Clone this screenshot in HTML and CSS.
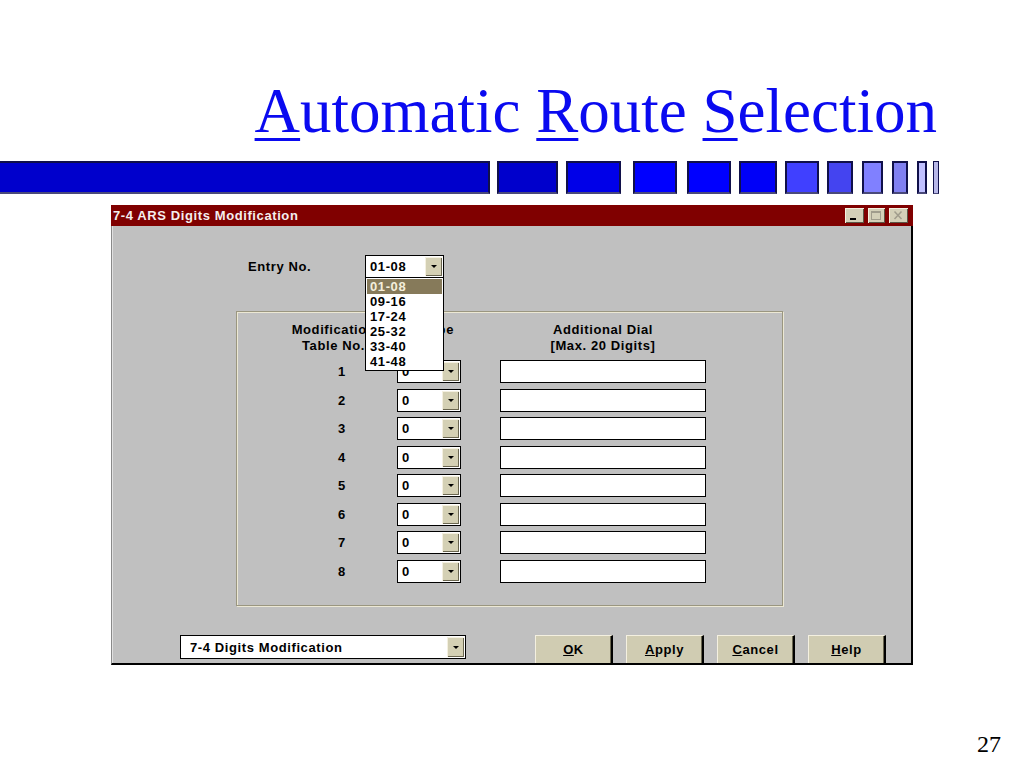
FILE: index.html
```html
<!DOCTYPE html>
<html>
<head>
<title>Automatic Route Selection</title>
<meta charset="UTF-8">
<link rel="stylesheet" href="styles.css">
</head>
<body>

	<h1 class="slide-title"><u>A</u>utomatic <u>R</u>oute <u>S</u>election</h1>

	<div class="stripe">
		<span></span><span></span><span></span><span></span><span></span><span></span>
		<span></span><span></span><span></span><span></span><span></span><span></span>
	</div>

	<div class="dialog">
		<div class="caption">
			<span class="caption-text">7-4 ARS Digits Modification</span>
			<div class="caption-btns">
				<span class="cbtn"><svg width="19" height="15" viewBox="0 0 19 15"><rect x="5" y="10" width="6" height="2" fill="#000"/></svg></span>
				<span class="cbtn"><svg width="17" height="15" viewBox="0 0 17 15"><rect x="3.5" y="3.5" width="9" height="8" fill="none" stroke="#a09c8c" stroke-width="1"/><line x1="3.5" y1="4.5" x2="12.5" y2="4.5" stroke="#a09c8c"/></svg></span>
				<span class="cbtn"><svg width="19" height="15" viewBox="0 0 19 15"><path d="M5.5 3.5 L12.5 11 M12.5 3.5 L5.5 11" stroke="#a09c8c" stroke-width="1.5"/></svg></span>
			</div>
		</div>

		<div class="client">
			<div class="entry-row">
				<label class="entry-label">Entry No.</label>
				<div class="combo entry-combo">
					<span class="combo-value">01-08</span>
					<span class="drop-btn"><i></i></span>
					<ul class="droplist">
						<li class="sel">01-08</li>
						<li>09-16</li>
						<li>17-24</li>
						<li>25-32</li>
						<li>33-40</li>
						<li>41-48</li>
					</ul>
				</div>
			</div>

			<div class="group">
				<div class="grid head">
					<div class="h-no">Modification<br>Table No.</div>
					<div class="h-type">Type</div>
					<div class="h-dial">Additional Dial<br>[Max. 20 Digits]</div>
				</div>
				<div class="grid rows">
					<div class="no">1</div><div class="combo small"><span class="combo-value">0</span><span class="drop-btn"><i></i></span></div><div class="field"></div>
					<div class="no">2</div><div class="combo small"><span class="combo-value">0</span><span class="drop-btn"><i></i></span></div><div class="field"></div>
					<div class="no">3</div><div class="combo small"><span class="combo-value">0</span><span class="drop-btn"><i></i></span></div><div class="field"></div>
					<div class="no">4</div><div class="combo small"><span class="combo-value">0</span><span class="drop-btn"><i></i></span></div><div class="field"></div>
					<div class="no">5</div><div class="combo small"><span class="combo-value">0</span><span class="drop-btn"><i></i></span></div><div class="field"></div>
					<div class="no">6</div><div class="combo small"><span class="combo-value">0</span><span class="drop-btn"><i></i></span></div><div class="field"></div>
					<div class="no">7</div><div class="combo small"><span class="combo-value">0</span><span class="drop-btn"><i></i></span></div><div class="field"></div>
					<div class="no">8</div><div class="combo small"><span class="combo-value">0</span><span class="drop-btn"><i></i></span></div><div class="field"></div>
				</div>
			</div>

			<div class="footer-row">
				<div class="combo page-combo">
					<span class="combo-value">7-4 Digits Modification</span>
					<span class="drop-btn"><i></i></span>
				</div>
				<div class="buttons">
					<button class="btn"><u>O</u>K</button>
					<button class="btn"><u>A</u>pply</button>
					<button class="btn"><u>C</u>ancel</button>
					<button class="btn"><u>H</u>elp</button>
				</div>
			</div>
		</div>
	</div>

	<div class="page-no">27</div>

</body>
</html>
```

FILE: styles.css
```css
body {
	margin: 0;
	background: #fff;
	font-family: "Liberation Sans", Arial, sans-serif;
}

.slide-title {
	margin: 80px 87px 0 0;
	text-align: right;
	font: normal 63px/63px "Liberation Serif", "Times New Roman", serif;
	color: #0a0af0;
}

.slide-title u {
	text-decoration-thickness: 3px;
	text-underline-offset: 6px;
}

/* blue strip under the title */
.stripe {
	display: flex;
	margin-top: 18px;
	height: 33px;
}

.stripe span {
	box-sizing: border-box;
	height: 33px;
	border: 2px solid #10104a;
	border-bottom-color: #4a4a7a;
}

.stripe span:nth-child(1)  { width: 490px; background: #0000cc; border-left: 0; }
.stripe span:nth-child(2)  { width: 61px; margin-left: 7px; background: #0000cc; }
.stripe span:nth-child(3)  { width: 55px; margin-left: 8px; background: #0000e8; }
.stripe span:nth-child(4)  { width: 44px; margin-left: 12px; background: #0000ff; }
.stripe span:nth-child(5)  { width: 44px; margin-left: 10px; background: #0000ff; }
.stripe span:nth-child(6)  { width: 38px; margin-left: 8px; background: #0000f8; }
.stripe span:nth-child(7)  { width: 34px; margin-left: 8px; background: #4040ff; }
.stripe span:nth-child(8)  { width: 26px; margin-left: 8px; background: #4444f0; }
.stripe span:nth-child(9)  { width: 21px; margin-left: 9px; background: #8080ff; }
.stripe span:nth-child(10) { width: 16px; margin-left: 9px; background: #8080f0; }
.stripe span:nth-child(11) { width: 10px; margin-left: 9px; background: #c0c0ff; }
.stripe span:nth-child(12) { width: 6px; margin-left: 6px; background: #b8b8e8; border-width: 1px; }

/* the window */
.dialog {
	margin: 11px 0 0 111px;
	width: 802px;
	font-size: 13px;
	font-weight: bold;
	letter-spacing: 0.6px;
	color: #000;
}

.caption {
	display: flex;
	align-items: center;
	justify-content: space-between;
	height: 21px;
	padding: 0 5px 0 2px;
	background: #800000;
	color: #f4eeee;
	font-size: 13px;
}

.caption-btns {
	display: flex;
	gap: 4px;
}

.cbtn {
	display: block;
	height: 15px;
	background: #d4d0b8;
	box-shadow: inset 1px 1px 0 #f4f0e0, inset -1px -1px 0 #5a5646;
}

.cbtn svg {
	display: block;
}

.client {
	background: #c0c0c0;
	border-left: 1px solid #8a8a8a;
	box-shadow: inset 1px 0 0 #e0e0e0;
	border-right: 2px solid #000;
	border-bottom: 2px solid #000;
	padding: 29px 0 0 0;
}

.entry-row {
	display: flex;
	align-items: center;
	padding-left: 136px;
}

.entry-label {
	width: 117px;
}

/* combo boxes */
.combo {
	position: relative;
	box-sizing: border-box;
	display: flex;
	align-items: center;
	justify-content: space-between;
	background: #fff;
	border: 1px solid #000;
	padding: 1px 1px 1px 4px;
}

.entry-combo {
	width: 79px;
	height: 23px;
}

.combo.small {
	width: 64px;
	height: 23px;
}

.page-combo {
	width: 286px;
	height: 24px;
	padding-left: 9px;
}

.drop-btn {
	display: flex;
	align-items: center;
	justify-content: center;
	width: 17px;
	height: 100%;
	background: #d4d0b4;
	box-shadow: inset 1px 1px 0 #f4f0e0, inset -1px -1px 0 #6a6650;
}

.drop-btn i {
	width: 0;
	height: 0;
	border-left: 3px solid transparent;
	border-right: 3px solid transparent;
	border-top: 3px solid #000;
}

.droplist {
	position: absolute;
	top: 21px;
	left: -1px;
	width: 79px;
	box-sizing: border-box;
	margin: 0;
	padding: 1px 0 1px 1px;
	list-style: none;
	background: #fff;
	border: 1px solid #000;
	z-index: 2;
}

.droplist li {
	height: 15px;
	line-height: 15px;
	padding-left: 3px;
}

.droplist li.sel {
	background: #867a5a;
	color: #f4eedc;
	margin-right: 1px;
}

/* group box with the table */
.group {
	margin: 33px 0 0 124px;
	width: 547px;
	height: 295px;
	box-sizing: border-box;
	border: 1px solid #9a9680;
	box-shadow: 1px 1px 0 #ece8d4, inset 1px 1px 0 #ece8d4;
	padding: 10px 0 0 33px;
}

.grid {
	display: grid;
	grid-template-columns: 127px 62px 206px;
	column-gap: 0;
}

.head {
	grid-template-columns: 127px 62px 41px 206px;
	line-height: 16px;
	text-align: center;
}

.h-dial {
	grid-column: 4;
}

.h-type {
	text-align: right;
	padding-right: 5px;
}

.rows {
	grid-template-columns: 127px 64px 39px 206px;
	row-gap: 5.5px;
	margin-top: 6px;
}

.rows .field {
	grid-column: 4;
}

.rows .combo.small {
	grid-column: 2;
}

.no {
	grid-column: 1;
	display: flex;
	align-items: center;
	justify-content: center;
	padding-left: 17px;
	height: 23px;
}

.field {
	box-sizing: border-box;
	height: 23px;
	background: #fff;
	border: 1px solid #000;
}

/* bottom row */
.footer-row {
	display: flex;
	align-items: flex-start;
	margin-top: 29px;
	padding-left: 68px;
}

.buttons {
	display: flex;
	gap: 13px;
	margin-left: 69px;
}

.btn {
	width: 78px;
	height: 28px;
	padding: 0;
	font: inherit;
	letter-spacing: 0.6px;
	color: #000;
	background: #d0ccb2;
	border: 0;
	border-top: 1px solid #f4f0e0;
	border-left: 1px solid #f4f0e0;
	border-right: 2px solid #000;
	box-shadow: inset -1px 0 0 #6a6650;
}

.page-no {
	margin-top: 67px;
	padding-right: 23px;
	text-align: right;
	font: 24px/24px "Liberation Serif", "Times New Roman", serif;
	color: #000;
}
```
